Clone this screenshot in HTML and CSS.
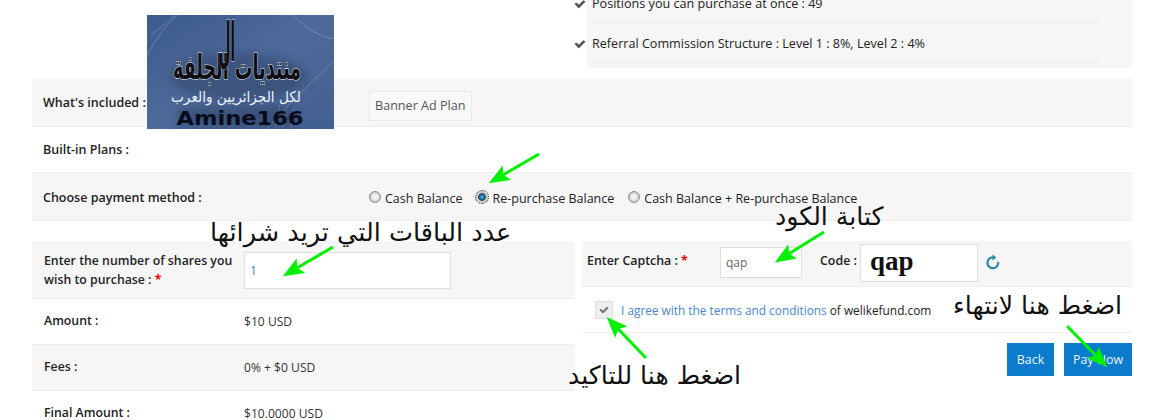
FILE: index.html
```html
<!DOCTYPE html>
<html lang="en">
<head>
<meta charset="utf-8">
<title>Purchase plan</title>
<link rel="stylesheet" href="styles.css">
</head>
<body>
<div class="page">
  <section class="features-wrap">
    <ul class="features">
      <li class="feature">
        <svg class="check" viewBox="0 0 1792 1792"><path d="M1671 566q0 40-28 68l-724 724-136 136q-28 28-68 28t-68-28l-136-136-362-362q-28-28-28-68t28-68l136-136q28-28 68-28t68 28l294 295 656-657q28-28 68-28t68 28l136 136q28 28 28 68z"/></svg>
        <span>Positions you can purchase at once : 49</span>
      </li>
      <li class="feature">
        <svg class="check" viewBox="0 0 1792 1792"><path d="M1671 566q0 40-28 68l-724 724-136 136q-28 28-68 28t-68-28l-136-136-362-362q-28-28-28-68t28-68l136-136q28-28 68-28t68 28l294 295 656-657q28-28 68-28t68 28l136 136q28 28 28 68z"/></svg>
        <span>Referral Commission Structure : Level 1 : 8%, Level 2 : 4%</span>
      </li>
    </ul>
  </section>

  <section class="table">
    <div class="row row-included shade">
      <div class="label">What's included :</div>
      <div class="value"><span class="tag">Banner Ad Plan</span></div>
    </div>
    <div class="row row-builtin">
      <div class="label">Built-in Plans :</div>
    </div>
    <div class="row row-method shade">
      <div class="label">Choose payment method :</div>
      <div class="value methods">
        <label class="method"><input class="radio" type="radio" name="pay"><span>Cash Balance</span></label>
        <label class="method"><input class="radio radio-on" type="radio" name="pay" checked><span>Re-purchase Balance</span></label>
        <label class="method"><input class="radio" type="radio" name="pay"><span>Cash Balance + Re-purchase Balance</span></label>
      </div>
    </div>
  </section>

  <section class="columns">
    <div class="col-left">
      <div class="lrow lrow-shares shade">
        <div class="llabel">Enter the number of shares you wish to purchase : <span class="req">*</span></div>
        <input class="input input-shares" type="text" value="1">
      </div>
      <div class="lrow">
        <div class="llabel">Amount :</div><div class="lvalue">$10 USD</div>
      </div>
      <div class="lrow shade">
        <div class="llabel">Fees :</div><div class="lvalue">0% + $0 USD</div>
      </div>
      <div class="lrow">
        <div class="llabel">Final Amount :</div><div class="lvalue">$10.0000 USD</div>
      </div>
    </div>
    <div class="col-right">
      <div class="captcha shade">
        <div class="cap-label">Enter Captcha : <span class="req">*</span></div>
        <input class="input input-captcha" type="text" value="qap">
        <div class="code-label">Code :</div>
        <div class="code-box">qap</div>
        <svg class="refresh" viewBox="0 0 16 18"><path class="refresh-arc" d="M13.2 9A5.4 5.4 0 1 1 7.8 4.4"/><path class="refresh-head" d="M7.4 1.4 11.4 4.4 7.4 7.4Z"/></svg>
      </div>
      <div class="agree">
        <span class="checkbox"><svg viewBox="0 0 1792 1792"><path d="M1671 566q0 40-28 68l-724 724-136 136q-28 28-68 28t-68-28l-136-136-362-362q-28-28-28-68t28-68l136-136q28-28 68-28t68 28l294 295 656-657q28-28 68-28t68 28l136 136q28 28 28 68z"/></svg></span>
        <span class="agree-text"><a class="terms" href="#">I agree with the terms and conditions</a> of welikefund.com</span>
      </div>
      <div class="actions">
        <a class="btn" href="#">Back</a>
        <a class="btn" href="#">Pay Now</a>
      </div>
    </div>
  </section>

  <svg class="logo" viewBox="0 0 187 114" role="img" aria-label="Amine166">
    <defs>
      <linearGradient id="logoBg" x1="0" y1="0" x2="1" y2="1">
        <stop offset="0" stop-color="#3c5a8c"/>
        <stop offset="0.5" stop-color="#4d6a9a"/>
        <stop offset="1" stop-color="#42608f"/>
      </linearGradient>
      <filter id="soft" x="-20%" y="-20%" width="140%" height="140%"><feGaussianBlur stdDeviation="5"/></filter>
    </defs>
    <rect width="187" height="114" fill="url(#logoBg)"/>
    <path class="logo-streaks" d="M0 40 Q14 15 30 0 M4 20 Q20 8 28 0 M120 114 Q150 80 187 46 M146 0 Q168 22 187 24 M128 114 l5 -24 M136 114 l4 -24 M144 114 l3 -22"/>
    <ellipse class="logo-shade" cx="92" cy="62" rx="68" ry="24" filter="url(#soft)"/>
    <rect class="logo-band" x="30" y="92" width="120" height="20" filter="url(#soft)"/>
    <text class="logo-big" x="90" y="64" text-anchor="middle" direction="rtl" textLength="128" lengthAdjust="spacingAndGlyphs">منتديات الجلفة</text>
    <text class="logo-tall" x="80" y="46" text-anchor="middle" textLength="16" lengthAdjust="spacingAndGlyphs">ال</text>
    <text class="logo-mid" x="89" y="87" text-anchor="middle" direction="rtl" textLength="130" lengthAdjust="spacingAndGlyphs">لكل الجزائريين والعرب</text>
    <text class="logo-name" x="93" y="110" text-anchor="middle" textLength="127" lengthAdjust="spacingAndGlyphs">Amine166</text>
  </svg>

  <div class="note note-shares" dir="rtl">عدد الباقات التي تريد شرائها</div>
  <div class="note note-code" dir="rtl">كتابة الكود</div>
  <div class="note note-finish" dir="rtl">اضغط هنا لانتهاء</div>
  <div class="note note-confirm" dir="rtl">اضغط هنا للتاكيد</div>

  <svg class="arrows" viewBox="0 0 1171 420">
    <defs>
      <marker id="head" viewBox="0 0 20 16" refX="12" refY="8" markerUnits="userSpaceOnUse" markerWidth="21" markerHeight="17" orient="auto">
        <path d="M0 0 L20 8 L0 16 L4 8 Z" fill="#00f000"/>
      </marker>
    </defs>
    <g class="arrow-lines">
      <line x1="539" y1="154" x2="496" y2="179" marker-end="url(#head)"/>
      <line x1="333" y1="247" x2="290" y2="272" marker-end="url(#head)"/>
      <line x1="824" y1="232" x2="782" y2="258" marker-end="url(#head)"/>
      <line x1="646" y1="358" x2="612.5" y2="323" marker-end="url(#head)"/>
      <line x1="1067" y1="326" x2="1101.4" y2="361.3" marker-end="url(#head)"/>
    </g>
  </svg>
</div>
</body>
</html>
```

FILE: styles.css
```css
* { box-sizing: border-box; }
html, body { margin: 0; padding: 0; background: #fff; }
body { width: 1171px; height: 420px; overflow: hidden; font-family: "Open Sans", "Noto Sans", sans-serif; font-size: 12.6px; color: #222; }
a { text-decoration: none; }

.page { position: relative; width: 1171px; height: 420px; overflow: hidden; padding: 0 39px 0 32px; }
.shade { background: #f6f6f6; }

.features-wrap { display: flow-root; height: 78px; padding: 0 0 10px 555px; }
.features { list-style: none; margin: -17px 0 0; padding: 0 30px 5px 5px; height: 85px; background: #f6f6f6; }
.feature { position: relative; height: 40px; padding-top: 10px; line-height: 22px; border-bottom: 1px solid #eee; color: #222; display: flex; }
.feature span { white-space: nowrap; }
.check { position: absolute; left: -18px; top: 15px; width: 12px; height: 12px; fill: #555; }

.row { display: flex; border-bottom: 1px solid #eee; }
.label { width: 337px; padding-left: 11px; font-weight: 600; font-size: 12.5px; color: #222; }
.row-included { height: 49px; }
.row-included .label { padding-top: 16px; }
.row-included .value { padding-top: 13px; }
.tag { display: inline-block; height: 30px; line-height: 28px; padding: 0 5px; border: 1px solid #e9e9e9; color: #555; background: #f8f8f8; }
.row-builtin { height: 46px; }
.row-builtin .label { padding-top: 14px; }
.row-method { height: 48px; }
.row-method .label { padding-top: 16px; }
.methods { display: flex; padding-top: 16px; gap: 14px; color: #222; font-size: 12.5px; }
.method { display: flex; align-items: center; height: 18px; }
.radio { appearance: none; -webkit-appearance: none; width: 12px; height: 12px; margin: 0 4px 2px 0; border-radius: 50%; border: 1px solid #8d8d8d; background: radial-gradient(circle, #f4f4f4 0 2px, #c8c8c8 5px); }
.radio-on { border-color: #bdbdbd; background: radial-gradient(circle at 50% 50%, #3fa2dc 0 1px, #0f5f96 2.6px, #2b3c48 3.4px, #cfcfcf 4.2px); outline: 1px dotted #222; outline-offset: 0; }

.columns { display: flex; justify-content: space-between; margin-top: 20px; }
.col-left { width: 543px; }
.col-right { width: 550px; }
.lrow { display: flex; height: 46px; border-bottom: 1px solid #eee; }
.lrow-shares { height: 58px; padding-top: 11px; }
.llabel { width: 212px; padding-left: 12px; padding-top: 12px; font-weight: 600; font-size: 12.3px; color: #222; line-height: 20px; }
.lrow-shares .llabel { padding-top: 0; line-height: 19px; margin-top: -1px; }
.lvalue { padding-top: 14px; color: #333; font-size: 12.1px; }
.req { color: #e00; font-weight: 700; }
.input { font: inherit; border: 1px solid #ddd; background: #fff; color: #666; padding: 0 5px; outline: none; border-radius: 0; }
.input-shares { width: 207px; height: 37px; color: #4a7fb0; font-size: 12px; }

.captcha { display: flex; align-items: flex-start; height: 46px; border-bottom: 1px solid #eee; }
.cap-label { width: 138px; padding: 12px 0 0 5px; font-weight: 600; font-size: 12.4px; line-height: 16px; }
.input-captcha { width: 82px; height: 31px; margin-top: 6px; font-size: 12px; }
.code-label { margin-left: 18px; padding-top: 12px; font-weight: 600; font-size: 12.4px; line-height: 16px; width: 40px; }
.code-box { width: 118px; height: 38px; margin-top: 3px; background: #fff; border: 1px solid #ddd; font-family: "Liberation Serif", serif; font-weight: 700; font-size: 27px; line-height: 32px; color: #111; padding-left: 9px; }
.refresh { width: 16px; height: 18px; margin: 12px 0 0 7px; }
.refresh-arc { fill: none; stroke: #2a8aa6; stroke-width: 2.2; }
.refresh-head { fill: #2a8aa6; }

.agree { display: flex; align-items: center; height: 46px; border-bottom: 1px solid #eee; padding-left: 13px; }
.checkbox { width: 18px; height: 18px; background: #eee; border: 1px solid #ddd; display: flex; align-items: center; justify-content: center; margin-right: 8px; }
.checkbox svg { width: 10px; height: 10px; fill: #777; }
.agree-text { color: #222; font-size: 11.85px; }
.terms { color: #4a85c9; }

.actions { display: flex; justify-content: flex-end; gap: 10px; margin-top: 10px; }
.btn { height: 33px; line-height: 33px; text-align: center; color: #eaf4fb; background: #0a7ccb; font-size: 12.4px; }
.btn:first-child { width: 47px; }
.btn:last-child { width: 68px; }

.logo { position: absolute; left: 147px; top: 15px; width: 187px; height: 114px; }
.logo-streaks { stroke: #8aa1c4; stroke-width: 1; fill: none; opacity: .55; }
.logo-shade { fill: #22304f; opacity: .35; }
.logo-band { fill: #1d2a48; opacity: .35; }
.logo-big { font-family: "DejaVu Sans", sans-serif; font-size: 34px; font-weight: 700; fill: #0d0d12; stroke: #e8eef8; stroke-width: 1.2px; paint-order: stroke; }
.logo-tall { font-family: "DejaVu Sans", sans-serif; font-size: 54px; font-weight: 700; fill: #0d0d12; stroke: #e8eef8; stroke-width: .8px; paint-order: stroke; }
.logo-mid { font-family: "DejaVu Sans", sans-serif; font-size: 15px; fill: #eef2fa; }
.logo-name { font-family: "DejaVu Sans", sans-serif; font-size: 19px; font-weight: 700; fill: #070b1c; }

.note { position: absolute; font-family: "DejaVu Sans", sans-serif; font-size: 25.2px; line-height: 30px; color: #111; white-space: nowrap; }
.note-shares { left: 210px; top: 217px; font-size: 25.5px; }
.note-code { left: 775px; top: 202px; }
.note-finish { left: 953px; top: 291px; }
.note-confirm { left: 568px; top: 361px; }

.arrows { position: absolute; left: 0; top: 0; width: 1171px; height: 420px; pointer-events: none; }
.arrow-lines line { stroke: #00f000; stroke-width: 3; }
```
